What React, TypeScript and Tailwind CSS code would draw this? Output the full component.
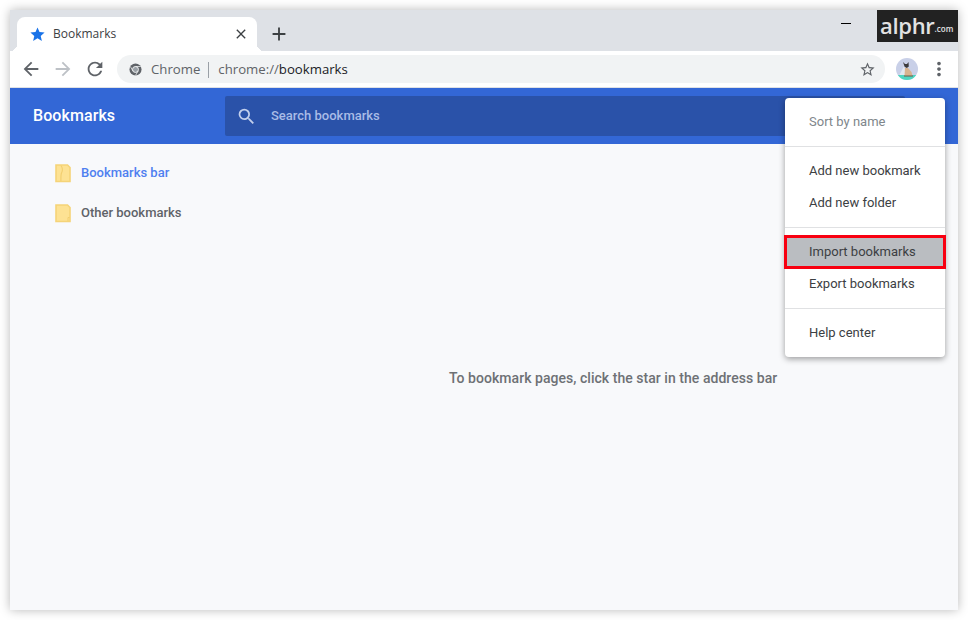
import { MdAdd, MdArrowBack, MdArrowForward, MdClose, MdMoreVert, MdRefresh, MdSearch, MdStar, MdStarBorder } from 'react-icons/md';

const FolderIcon = ({ open }: { open?: boolean }) => (
  <svg width="16" height="19" viewBox="0 0 16 19" className="shrink-0">
    <path d="M1 1h11.5l2.5 2.5V17.5H1z" fill="#fde293" stroke="#f5d478" strokeWidth="1.6" />
    {open ? (
      <path d="M6 1.5c2 3 2 5 .5 7.5-.7 1.5-.6 5-.6 8" fill="none" stroke="#f2cf70" strokeWidth="1.2" />
    ) : (
      <path d="M13 17v-3.5h1.6" fill="none" stroke="#f2cf70" strokeWidth="1" />
    )}
  </svg>
);

const ChromeGlyph = () => (
  <svg width="13" height="13" viewBox="0 0 14 14" className="shrink-0">
    <circle cx="7" cy="7" r="6.5" fill="#5f6368" />
    <circle cx="7" cy="7" r="3.2" fill="#9aa0a6" stroke="#f1f3f4" strokeWidth="1" />
    <path d="M7 3.8h5.6M4.2 8.6 1.6 4M9.8 8.6 7 13.4" stroke="#f1f3f4" strokeWidth="0.8" fill="none" />
  </svg>
);

const Avatar = () => (
  <svg width="22" height="22" viewBox="0 0 22 22" className="shrink-0">
    <defs>
      <clipPath id="avatar-clip">
        <circle cx="11" cy="11" r="11" />
      </clipPath>
    </defs>
    <g clipPath="url(#avatar-clip)">
      <rect width="22" height="22" fill="#c9d0e8" />
      <path d="M3 18 8 8l3 10z" fill="#e3e8f0" />
      <rect y="17" width="22" height="5" fill="#4fd6c0" />
      <path d="M9 10h3l3.5 4 1 4H8.5z" fill="#d8b48f" />
      <path d="M7 4l2 2h2l1.5-2 .3 4.5-2 1.5-2.2-1.2z" fill="#3c3a3c" />
      <path d="M8 17.5h9v1H8z" fill="#6b5a4a" />
    </g>
  </svg>
);

const MenuItem = ({ label, muted, active }: { label: string; muted?: boolean; active?: boolean }) => (
  <div
    className={`flex h-8 items-center pl-6 text-[13px] ${active ? 'bg-[#babdc1] text-[#3c4043]' : muted ? 'text-[#80868b]' : 'text-[#3c4043]'}`}
  >
    {label}
  </div>
);

const Divider = () => <div className="my-2 h-px bg-[#e0e1e3]" />;

export default function App() {
  return (
    <div className="h-[620px] w-[968px] overflow-hidden bg-white p-2.5 [font-family:Roboto,sans-serif]">
      <div className="relative flex h-[600px] w-[948px] flex-col bg-[#f8f9fb] shadow-[0_0_10px_rgba(0,0,0,0.28)]">
        {/* tab strip */}
        <div className="flex h-[41px] shrink-0 items-end bg-[#dee1e6] pl-[7px]">
          <div className="relative flex h-[34px] w-[240px] shrink-0 items-center rounded-t-lg bg-white pl-[12px] pr-[8px]">
            <span className="absolute -left-[7px] bottom-0 size-[7px] bg-[radial-gradient(circle_at_0_0,#dee1e6_7px,#ffffff_7px)]" />
            <span className="absolute -right-[7px] bottom-0 size-[7px] bg-[radial-gradient(circle_at_100%_0,#dee1e6_7px,#ffffff_7px)]" />
            <MdStar size={17} className="shrink-0 text-[#1a73e8]" />
            <span className="ml-[7px] flex-1 text-[12px] text-[#3c4043] [font-family:'Open_Sans',sans-serif]">Bookmarks</span>
            <MdClose size={16} className="shrink-0 text-[#3c4043]" />
          </div>
          <MdAdd size={22} className="mb-[6px] ml-[11px] shrink-0 text-[#3c4043]" />
          <div className="mb-[27px] ml-[551px] h-px w-[10px] shrink-0 bg-black" />
          <div className="mb-[9px] ml-[26px] flex h-8 w-[81px] shrink-0 items-center bg-[#222222] pb-0.5 pl-[3px] [font-family:'Open_Sans',sans-serif]">
            <span className="text-[22px] font-semibold leading-none tracking-[-0.3px] text-[#e2e2e2]">alphr</span>
            <span className="mt-2 text-[8px] font-semibold leading-none text-[#e2e2e2]">.com</span>
          </div>
        </div>

        {/* toolbar */}
        <div className="flex h-[37px] shrink-0 items-center border-b border-[#dfe1e5] bg-white pb-px">
          <MdArrowBack size={22} className="ml-[10px] shrink-0 text-[#5f6368]" />
          <MdArrowForward size={22} className="ml-[10px] shrink-0 text-[#bdc1c6]" />
          <MdRefresh size={22} className="ml-[10px] shrink-0 text-[#5f6368]" />
          <div className="ml-[11px] flex h-7 w-[768px] shrink-0 items-center rounded-full bg-[#f1f3f4] pl-3 pr-[9px] pt-[2px] text-[13.2px] [font-family:'Open_Sans',sans-serif]">
            <ChromeGlyph />
            <span className="ml-[9px] text-[#5f6368]">Chrome</span>
            <span className="ml-2 mr-[9px] h-4 w-px bg-[#9aa0a6]" />
            <span className="text-[#5f6368]">chrome://</span>
            <span className="text-[#202124]">bookmarks</span>
            <MdStarBorder size={17} className="ml-auto text-[#5f6368]" />
          </div>
          <div className="ml-[11px]">
            <Avatar />
          </div>
          <MdMoreVert size={22} className="ml-[10px] shrink-0 text-[#5f6368]" />
        </div>

        {/* page header */}
        <div className="flex h-14 shrink-0 items-center bg-[#3367d6] pl-[23px] text-white">
          <h1 className="w-[192px] text-[16px] font-medium leading-none tracking-[0.08px]">Bookmarks</h1>
          <div className="flex h-10 w-[680px] items-center rounded-[2px] bg-[#2a52a9] pl-[11px]">
            <MdSearch size={21} className="shrink-0 text-[#c2cfec]" />
            <span className="ml-[14px] text-[13px] font-medium text-[#a9bce6]">Search bookmarks</span>
          </div>
        </div>

        {/* page body */}
        <div className="flex flex-1">
          <div className="w-[439px] shrink-0 pl-[45px] pt-[9px]">
            <div className="flex h-10 items-center gap-[10px] text-[13px] font-medium text-[#4f80f0]">
              <FolderIcon open />
              <span>Bookmarks bar</span>
            </div>
            <div className="flex h-10 items-center gap-[10px] text-[13px] font-medium text-[#5f6368]">
              <FolderIcon />
              <span>Other bookmarks</span>
            </div>
          </div>
          <p className="pt-[227px] text-[14px] font-medium leading-none tracking-[0.04px] text-[#6e7175]">To bookmark pages, click the star in the address bar</p>
        </div>

        {/* sort menu */}
        <div className="absolute left-[775px] top-[88px] w-40 rounded-[4px] bg-white py-2 shadow-[0_2px_6px_rgba(0,0,0,0.38)]">
          <MenuItem label="Sort by name" muted />
          <Divider />
          <MenuItem label="Add new bookmark" />
          <MenuItem label="Add new folder" />
          <Divider />
          <div className="relative">
            <MenuItem label="Import bookmarks" active />
            <div className="absolute -inset-x-px -inset-y-[1px] border-[3px] border-[#f80011]" />
          </div>
          <MenuItem label="Export bookmarks" />
          <Divider />
          <MenuItem label="Help center" />
        </div>
      </div>
    </div>
  );
}
